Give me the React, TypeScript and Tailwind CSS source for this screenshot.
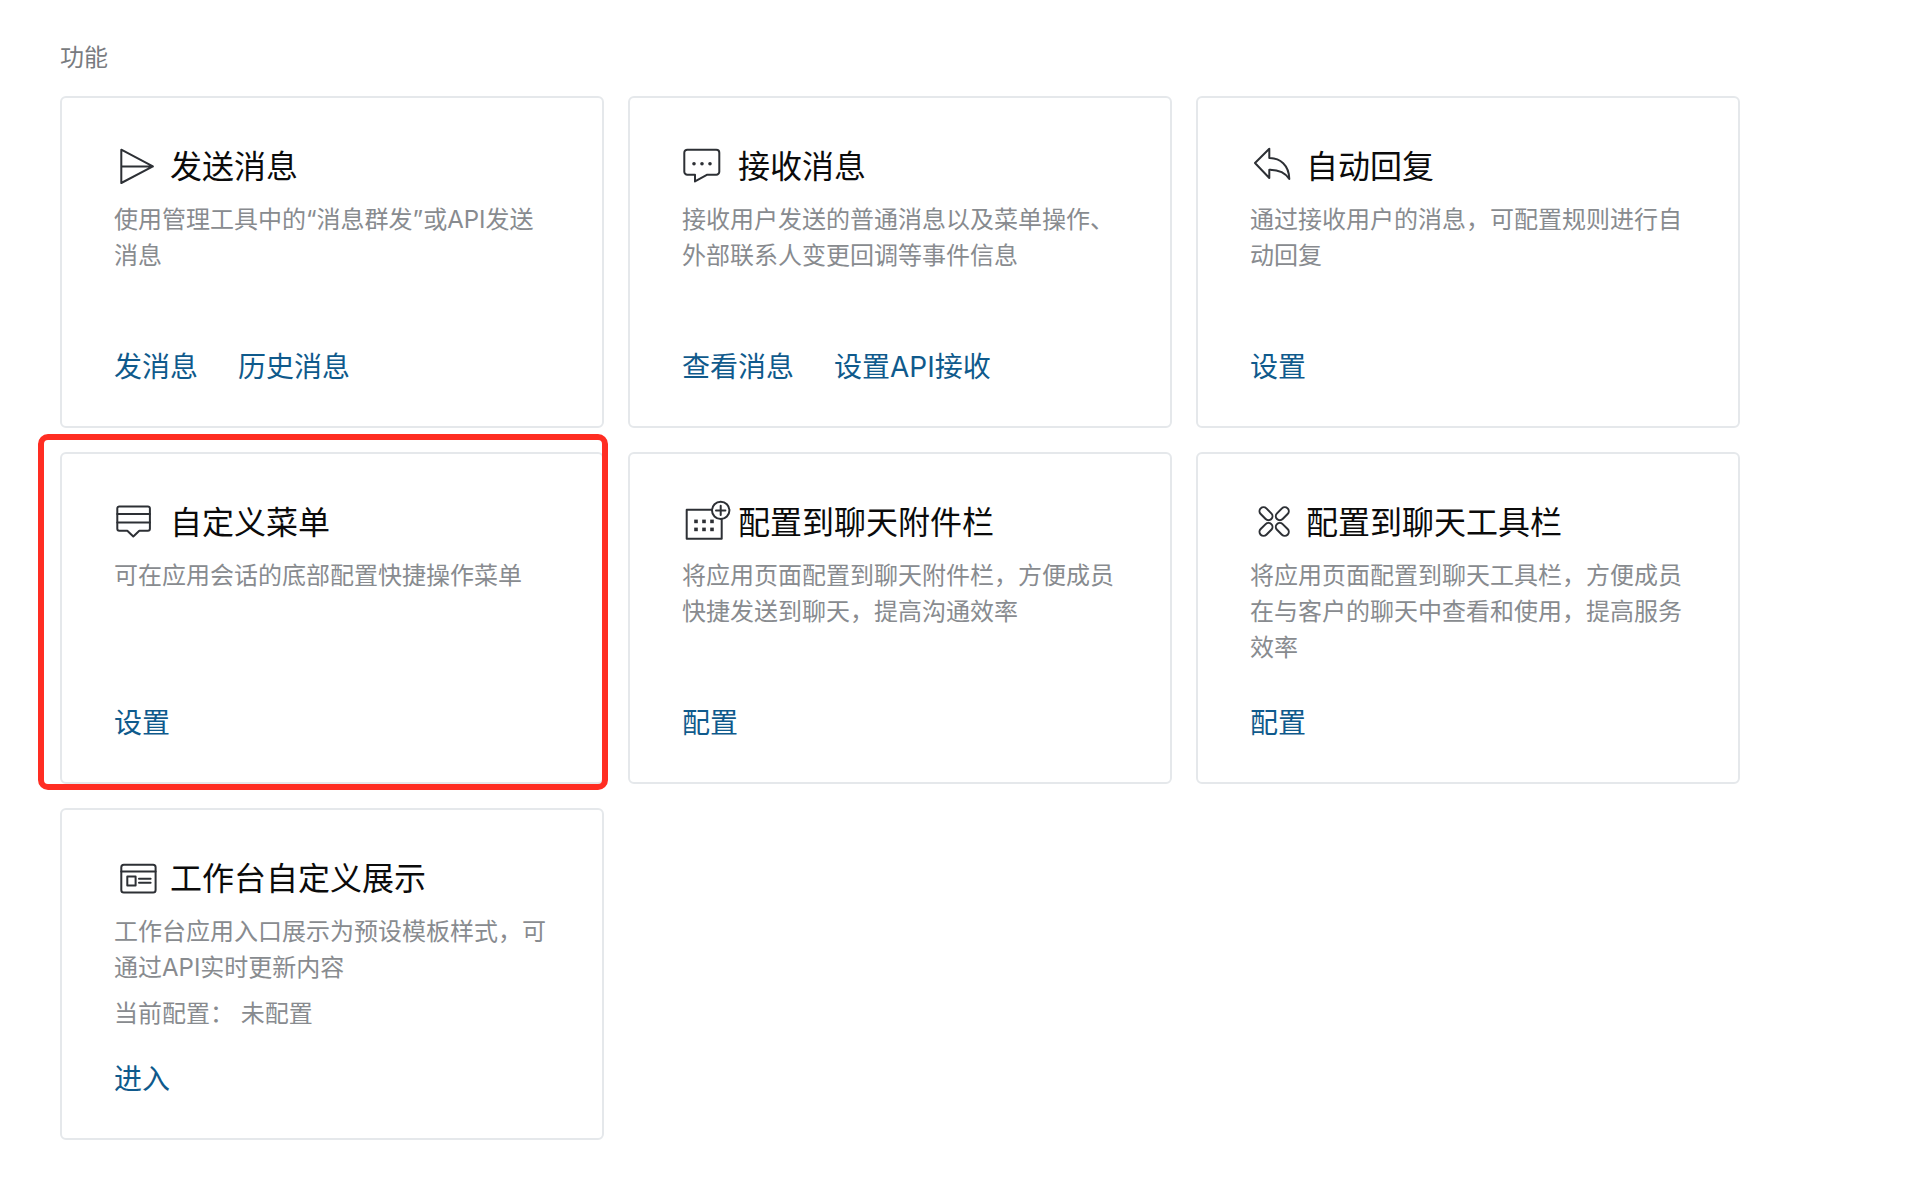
import type { ReactNode } from "react";

type Feature = {
  title: string;
  desc: string;
  icon: ReactNode;
  links: string[];
  config?: string;
  marked?: boolean;
};

function Icon({ children }: { children: ReactNode }) {
  return (
    <svg
      width="56"
      height="48"
      viewBox="-2 0 56 48"
      fill="none"
      stroke="#2d3035"
      strokeWidth="2"
      strokeLinejoin="round"
      strokeLinecap="round"
      className="shrink-0"
    >
      {children}
    </svg>
  );
}

const features: Feature[] = [
  {
    title: "发送消息",
    desc: "使用管理工具中的“消息群发”或API发送消息",
    links: ["发消息", "历史消息"],
    icon: (
      <Icon>
        <path d="M5.3 6.7L36.9 23.4L5.3 40ZM5.3 23.4H36.9" />
      </Icon>
    ),
  },
  {
    title: "接收消息",
    desc: "接收用户发送的普通消息以及菜单操作、外部联系人变更回调等事件信息",
    links: ["查看消息", "设置API接收"],
    icon: (
      <Icon>
        <path d="M11 31.7H3.3a3 3 0 0 1-3-3V9.7a3 3 0 0 1 3-3H32.3a3 3 0 0 1 3 3V28.7a3 3 0 0 1-3 3H23.3L11 38.4Z" />
        <circle cx="10" cy="20.7" r="1.8" fill="#2d3035" stroke="none" />
        <circle cx="18" cy="20.7" r="1.8" fill="#2d3035" stroke="none" />
        <circle cx="26" cy="20.7" r="1.8" fill="#2d3035" stroke="none" />
      </Icon>
    ),
  },
  {
    title: "自动回复",
    desc: "通过接收用户的消息，可配置规则进行自动回复",
    links: ["设置"],
    icon: (
      <Icon>
        <path d="M3 20L17.3 5.7V15C28 15 37 22 37.3 36C33 29 26 26.7 17.3 26.7V35Z" />
      </Icon>
    ),
  },
  {
    title: "自定义菜单",
    desc: "可在应用会话的底部配置快捷操作菜单",
    links: ["设置"],
    marked: true,
    icon: (
      <Icon>
        <path d="M3.3 7.4H31.9a2 2 0 0 1 2 2V29.7a2 2 0 0 1-2 2H23.3L17.3 37.4L11.3 31.7H3.3a2 2 0 0 1-2-2V9.4a2 2 0 0 1 2-2Z" />
        <path d="M1.3 15H33.9M1.3 23.4H33.9" />
      </Icon>
    ),
  },
  {
    title: "配置到聊天附件栏",
    desc: "将应用页面配置到聊天附件栏，方便成员快捷发送到聊天，提高沟通效率",
    links: ["配置"],
    icon: (
      <Icon>
        <path d="M27.7 10.7H2.7V39.7H37.7V20" />
        <circle cx="36.7" cy="11.4" r="8.7" />
        <path d="M32 11.4H41.4M36.7 6.7V16.1" />
        <g fill="#2d3035" stroke="none">
          <rect x="10.2" y="20.6" width="3.6" height="3.6" />
          <rect x="18.2" y="20.6" width="3.6" height="3.6" />
          <rect x="26.2" y="20.6" width="3.6" height="3.6" />
          <rect x="10.2" y="28.6" width="3.6" height="3.6" />
          <rect x="18.2" y="28.6" width="3.6" height="3.6" />
          <rect x="26.2" y="28.6" width="3.6" height="3.6" />
        </g>
      </Icon>
    ),
  },
  {
    title: "配置到聊天工具栏",
    desc: "将应用页面配置到聊天工具栏，方便成员在与客户的聊天中查看和使用，提高服务效率",
    links: ["配置"],
    icon: (
      <Icon>
        <rect x="6.5" y="10.7" width="15" height="8" rx="4" transform="rotate(45 14 14.7)" />
        <rect x="22.8" y="10.7" width="15" height="8" rx="4" transform="rotate(-45 30.3 14.7)" />
        <rect x="6.5" y="26.4" width="15" height="8" rx="4" transform="rotate(-45 14 30.4)" />
        <rect x="22.8" y="26.4" width="15" height="8" rx="4" transform="rotate(45 30.3 30.4)" />
      </Icon>
    ),
  },
  {
    title: "工作台自定义展示",
    desc: "工作台应用入口展示为预设模板样式，可通过API实时更新内容",
    links: ["进入"],
    config: "当前配置： 未配置",
    icon: (
      <Icon>
        <rect x="5.3" y="9.7" width="34.3" height="27.7" rx="2.5" />
        <path d="M5.3 16.4H39.6M23 23.7H34.6M23 27.7H34.6" />
        <rect x="11.3" y="21.4" width="8.3" height="9" />
      </Icon>
    ),
  },
];

function FeatureCard({ feature }: { feature: Feature }) {
  return (
    <div className="relative flex h-[332px] flex-col rounded-[6px] border-2 border-[#e5e8eb] bg-white px-[52px] pt-[45px] pb-[39px]">
      <div className="flex h-[48px] items-center">
        {feature.icon}
        <span className="text-[32px] leading-[48px] text-[#0b0b0b]">{feature.title}</span>
      </div>
      <p className="mt-[11px] text-[24px] leading-[36px] text-[#888b8f]">{feature.desc}</p>
      {feature.config && <p className="mt-[10px] text-[24px] leading-[36px] text-[#888b8f]">{feature.config}</p>}
      <div className="mt-auto flex gap-[40px] text-[28px] leading-[40px] text-[#0f5a8c]">
        {feature.links.map((link) => (
          <a key={link}>{link}</a>
        ))}
      </div>
      {feature.marked && (
        <div className="absolute -top-[20px] -right-[6px] -bottom-[8px] -left-[24px] rounded-[10px] border-[6px] border-[#ff2d22]" />
      )}
    </div>
  );
}

export default function App() {
  return (
    <div className="min-h-[1182px] bg-white pt-[40px] pl-[60px] font-['Inter','Noto_Sans_CJK_SC',sans-serif]">
      <div className="mb-[20px] text-[24px] leading-[36px] text-[#787b80]">功能</div>
      <div className="grid grid-cols-[repeat(3,544px)] gap-[24px]">
        {features.map((feature) => (
          <FeatureCard key={feature.title} feature={feature} />
        ))}
      </div>
    </div>
  );
}
